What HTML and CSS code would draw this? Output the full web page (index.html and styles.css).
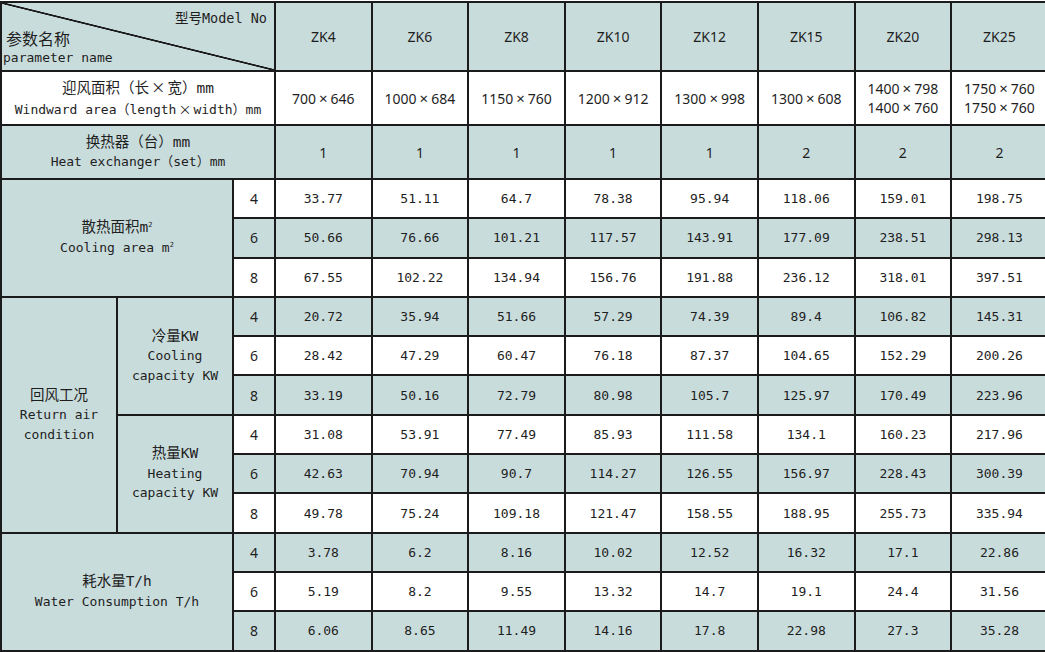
FILE: index.html
```html
<!DOCTYPE html>
<html lang="zh-CN">
<head>
<meta charset="utf-8">
<title>ZK 参数表</title>
<link rel="stylesheet" href="styles.css">
</head>
<body>
<div class="sheet">
  <div class="cell b corner span3">
    <div class="corner-model">型号Model No</div>
    <div class="corner-zh">参数名称</div>
    <div class="corner-en">parameter name</div>
  </div>
  <div class="cell b model">ZK4</div>
  <div class="cell b model">ZK6</div>
  <div class="cell b model">ZK8</div>
  <div class="cell b model">ZK10</div>
  <div class="cell b model">ZK12</div>
  <div class="cell b model">ZK15</div>
  <div class="cell b model">ZK20</div>
  <div class="cell b model">ZK25</div>

  <div class="cell w label span3"><span class="zh">迎风面积（长<span class="x">×</span>宽）mm</span><span>Windward area（length<span class="x">×</span>width）mm</span></div>
  <div class="cell w model">700<span class="x">×</span>646</div>
  <div class="cell w model">1000<span class="x">×</span>684</div>
  <div class="cell w model">1150<span class="x">×</span>760</div>
  <div class="cell w model">1200<span class="x">×</span>912</div>
  <div class="cell w model">1300<span class="x">×</span>998</div>
  <div class="cell w model">1300<span class="x">×</span>608</div>
  <div class="cell w model stack"><span>1400<span class="x">×</span>798</span><span>1400<span class="x">×</span>760</span></div>
  <div class="cell w model stack"><span>1750<span class="x">×</span>760</span><span>1750<span class="x">×</span>760</span></div>

  <div class="cell b label span3"><span class="zh">换热器（台）mm</span><span>Heat exchanger（set）mm</span></div>
  <div class="cell b model">1</div>
  <div class="cell b model">1</div>
  <div class="cell b model">1</div>
  <div class="cell b model">1</div>
  <div class="cell b model">1</div>
  <div class="cell b model">2</div>
  <div class="cell b model">2</div>
  <div class="cell b model">2</div>

  <!-- Cooling area -->
  <div class="cell b label span2 rows3"><span class="zh">散热面积m<sup>2</sup></span><span>Cooling area m<sup>2</sup></span></div>
  <div class="cell w sub">4</div>
  <div class="cell w num">33.77</div><div class="cell w num">51.11</div><div class="cell w num">64.7</div><div class="cell w num">78.38</div><div class="cell w num">95.94</div><div class="cell w num">118.06</div><div class="cell w num">159.01</div><div class="cell w num">198.75</div>
  <div class="cell b sub">6</div>
  <div class="cell b num">50.66</div><div class="cell b num">76.66</div><div class="cell b num">101.21</div><div class="cell b num">117.57</div><div class="cell b num">143.91</div><div class="cell b num">177.09</div><div class="cell b num">238.51</div><div class="cell b num">298.13</div>
  <div class="cell w sub">8</div>
  <div class="cell w num">67.55</div><div class="cell w num">102.22</div><div class="cell w num">134.94</div><div class="cell w num">156.76</div><div class="cell w num">191.88</div><div class="cell w num">236.12</div><div class="cell w num">318.01</div><div class="cell w num">397.51</div>

  <!-- Return air condition -->
  <div class="cell b label rows6"><span class="zh">回风工况</span><span>Return air</span><span>condition</span></div>
  <div class="cell b label rows3"><span class="zh">冷量KW</span><span>Cooling</span><span>capacity KW</span></div>
  <div class="cell b sub">4</div>
  <div class="cell b num">20.72</div><div class="cell b num">35.94</div><div class="cell b num">51.66</div><div class="cell b num">57.29</div><div class="cell b num">74.39</div><div class="cell b num">89.4</div><div class="cell b num">106.82</div><div class="cell b num">145.31</div>
  <div class="cell w sub">6</div>
  <div class="cell w num">28.42</div><div class="cell w num">47.29</div><div class="cell w num">60.47</div><div class="cell w num">76.18</div><div class="cell w num">87.37</div><div class="cell w num">104.65</div><div class="cell w num">152.29</div><div class="cell w num">200.26</div>
  <div class="cell b sub">8</div>
  <div class="cell b num">33.19</div><div class="cell b num">50.16</div><div class="cell b num">72.79</div><div class="cell b num">80.98</div><div class="cell b num">105.7</div><div class="cell b num">125.97</div><div class="cell b num">170.49</div><div class="cell b num">223.96</div>

  <div class="cell b label rows3"><span class="zh">热量KW</span><span>Heating</span><span>capacity KW</span></div>
  <div class="cell w sub">4</div>
  <div class="cell w num">31.08</div><div class="cell w num">53.91</div><div class="cell w num">77.49</div><div class="cell w num">85.93</div><div class="cell w num">111.58</div><div class="cell w num">134.1</div><div class="cell w num">160.23</div><div class="cell w num">217.96</div>
  <div class="cell b sub">6</div>
  <div class="cell b num">42.63</div><div class="cell b num">70.94</div><div class="cell b num">90.7</div><div class="cell b num">114.27</div><div class="cell b num">126.55</div><div class="cell b num">156.97</div><div class="cell b num">228.43</div><div class="cell b num">300.39</div>
  <div class="cell w sub">8</div>
  <div class="cell w num">49.78</div><div class="cell w num">75.24</div><div class="cell w num">109.18</div><div class="cell w num">121.47</div><div class="cell w num">158.55</div><div class="cell w num">188.95</div><div class="cell w num">255.73</div><div class="cell w num">335.94</div>

  <!-- Water consumption -->
  <div class="cell b label span2 rows3"><span class="zh">耗水量T/h</span><span>Water Consumption T/h</span></div>
  <div class="cell b sub">4</div>
  <div class="cell b num">3.78</div><div class="cell b num">6.2</div><div class="cell b num">8.16</div><div class="cell b num">10.02</div><div class="cell b num">12.52</div><div class="cell b num">16.32</div><div class="cell b num">17.1</div><div class="cell b num">22.86</div>
  <div class="cell w sub">6</div>
  <div class="cell w num">5.19</div><div class="cell w num">8.2</div><div class="cell w num">9.55</div><div class="cell w num">13.32</div><div class="cell w num">14.7</div><div class="cell w num">19.1</div><div class="cell w num">24.4</div><div class="cell w num">31.56</div>
  <div class="cell b sub">8</div>
  <div class="cell b num">6.06</div><div class="cell b num">8.65</div><div class="cell b num">11.49</div><div class="cell b num">14.16</div><div class="cell b num">17.8</div><div class="cell b num">22.98</div><div class="cell b num">27.3</div><div class="cell b num">35.28</div>
</div>
</body>
</html>
```

FILE: styles.css
```css
html, body {
  margin: 0;
  background: #ffffff;
}

body {
  padding-top: 1px;
  overflow: hidden;
}

.sheet {
  display: grid;
  grid-template-columns: 114px 114px 40px repeat(8, 94.6px);
  grid-template-rows: 67px 52px 52px repeat(12, 37.3px);
  gap: 2px;
  padding: 2px 0 2px 2px;
  width: max-content;
  background: #1b1b1b;
}

.cell {
  display: flex;
  align-items: center;
  justify-content: center;
  text-align: center;
  color: #1e1e1e;
  overflow: hidden;
}

.b { background: #c9dcdc; }
.w { background: #ffffff; }

.span3 { grid-column: span 3; }
.span2 { grid-column: span 2; }
.rows3 { grid-row: span 3; }
.rows6 { grid-row: span 6; }

.corner {
  flex-direction: column;
  align-items: stretch;
  justify-content: flex-start;
  padding-top: 5px;
  box-sizing: border-box;
  background:
    linear-gradient(to top right, transparent calc(50% - 1.2px), #1b1b1b calc(50% - 0.6px), #1b1b1b calc(50% + 0.6px), transparent calc(50% + 1.2px)),
    #c9dcdc;
  font-family: "DejaVu Sans Mono", "Noto Sans CJK SC", monospace;
  line-height: 20px;
}

.corner-model {
  text-align: right;
  padding-right: 7px;
  font-size: 13.5px;
}

.corner-zh {
  text-align: left;
  padding-left: 4px;
  font-family: "Noto Sans CJK SC", sans-serif;
  font-size: 16px;
}

.corner-en {
  text-align: left;
  padding-left: 1px;
  font-size: 13px;
}

.model {
  font-family: "Noto Sans", "Noto Sans CJK SC", sans-serif;
  font-size: 14px;
}

.model .x {
  margin: 0 3px;
  font-size: 15px;
}

.stack {
  flex-direction: column;
  line-height: 19px;
}

.sub {
  font-family: "Noto Sans", "Noto Sans CJK SC", sans-serif;
  font-size: 14px;
}

.num {
  font-family: "DejaVu Sans Mono", monospace;
  font-size: 13px;
}

.label {
  flex-direction: column;
  font-family: "DejaVu Sans Mono", "Noto Sans CJK SC", monospace;
  font-size: 13px;
  line-height: 19.5px;
}

.label .zh {
  font-size: 14.5px;
  line-height: 19.5px;
}

.label .x {
  font-family: "Noto Sans CJK SC", sans-serif;
  margin: 0 2px;
}

.label sup {
  font-size: 7px;
  line-height: 0;
  vertical-align: 5px;
}
```
